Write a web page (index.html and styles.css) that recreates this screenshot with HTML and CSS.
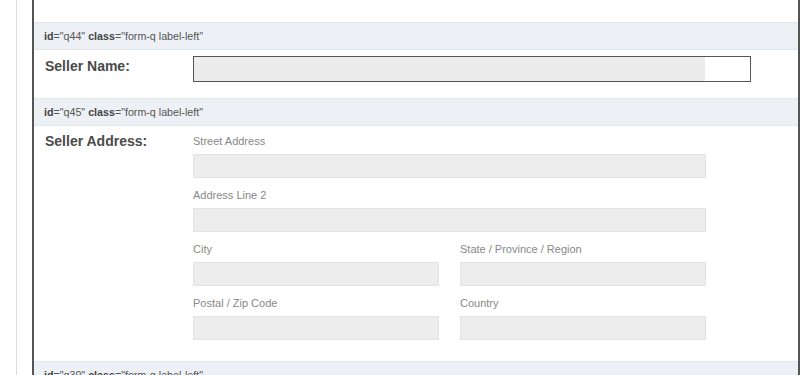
FILE: index.html
```html
<!DOCTYPE html>
<html>
<head>
    <title>Form Questions</title>
    <link rel="stylesheet" href="styles.css">
</head>
<body>
  <div class="page">
    <div class="form">
      <div class="q-prev"></div>

      <div class="q-tag"><b>id</b>="q44" <b>class</b>="form-q label-left"</div>
      <div class="q-row q-name">
        <label class="q-label">Seller Name:</label>
        <div class="name-input"><div class="name-fill"></div></div>
      </div>

      <div class="q-tag"><b>id</b>="q45" <b>class</b>="form-q label-left"</div>
      <div class="q-row q-address">
        <label class="q-label">Seller Address:</label>
        <div class="addr">
          <div class="field full">
            <span class="sub-label">Street Address</span>
            <div class="box"></div>
          </div>
          <div class="field full">
            <span class="sub-label">Address Line 2</span>
            <div class="box"></div>
          </div>
          <div class="field">
            <span class="sub-label">City</span>
            <div class="box"></div>
          </div>
          <div class="field">
            <span class="sub-label">State / Province / Region</span>
            <div class="box"></div>
          </div>
          <div class="field">
            <span class="sub-label">Postal / Zip Code</span>
            <div class="box"></div>
          </div>
          <div class="field">
            <span class="sub-label">Country</span>
            <div class="box"></div>
          </div>
        </div>
      </div>

      <div class="q-tag"><b>id</b>="q39" <b>class</b>="form-q label-left"</div>
      <div class="q-row q-next"></div>
    </div>
  </div>
</body>
</html>
```

FILE: styles.css
```css
  body {
      margin: 0;
      background-color: #fff;
      font-family: "Liberation Sans", Arial, sans-serif;
      overflow: hidden;
  }

  .page {
      margin-left: 16px;
      border-left: 1px solid #dcdcdc;
      padding-left: 15px;
      padding-right: 6px;
      min-height: 375px;
  }

  .form {
      border-left: 2px solid #555;
      border-right: 2px solid #555;
      min-height: 400px;
  }

  .q-prev {
      height: 22px;
  }

  .q-tag {
      height: 26px;
      line-height: 26px;
      padding-left: 10px;
      background-color: #edf1f5;
      border-top: 1px solid #dfe7ef;
      border-bottom: 1px solid #dfe7ef;
      font-size: 10.7px;
      color: #555;
  }

  .q-tag b {
      color: #444;
  }

  .q-row {
      display: flex;
      align-items: flex-start;
      padding-left: 11px;
  }

  .q-label {
      width: 148px;
      flex-shrink: 0;
      font-size: 14px;
      font-weight: bold;
      color: #4a4a4a;
  }

  .q-name {
      padding-top: 6px;
      height: 42px;
  }

  .q-name .q-label {
      line-height: 21px;
  }

  .name-input {
      width: 556px;
      height: 24px;
      border: 1px solid #555;
  }

  .name-fill {
      width: 511px;
      height: 24px;
      background-color: #ececec;
  }

  .q-address {
      padding-top: 8px;
      height: 227px;
  }

  .q-address .q-label {
      line-height: 14px;
  }

  .addr {
      width: 513px;
      display: flex;
      flex-wrap: wrap;
      align-content: flex-start;
      column-gap: 21px;
  }

  .field {
      width: 246px;
      margin-bottom: 10px;
  }

  .field.full {
      width: 513px;
  }

  .sub-label {
      display: block;
      height: 14px;
      line-height: 14px;
      margin-bottom: 6px;
      font-size: 11px;
      color: #888;
  }

  .box {
      height: 22px;
      background-color: #ededed;
      border: 1px solid #e3e3e3;
  }

  .q-next {
      height: 40px;
  }
```
